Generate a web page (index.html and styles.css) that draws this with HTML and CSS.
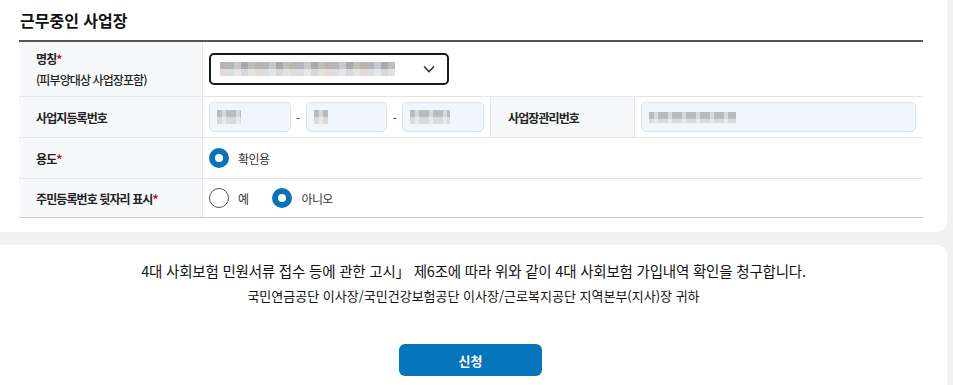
FILE: index.html
```html
<!DOCTYPE html>
<html lang="ko">
<head>
<meta charset="UTF-8" />
<meta name="viewport" content="width=device-width, initial-scale=1" />
<title>근무중인 사업장</title>
<link rel="stylesheet" href="styles.css">
</head>
<body>

<!-- 근무중인 사업장 -->
<section class="card card-top">
  <h2 class="section-title">근무중인 사업장</h2>

  <div class="form-table">
    <div class="row row-name">
      <div class="label">
        <span>명칭<em>*</em></span>
        <span class="sub">(피부양대상 사업장포함)</span>
      </div>
      <div class="cell span-3">
        <div class="select-box">
          <span class="mosaic mosaic-wide"></span>
          <svg class="chevron" width="12" height="8" viewBox="0 0 12 8"><path d="M1 1.5l5 5 5-5" fill="none" stroke="#333" stroke-width="1.6"/></svg>
        </div>
      </div>
    </div>

    <div class="row">
      <div class="label"><span>사업지등록번호</span></div>
      <div class="cell">
        <div class="input small"><span class="mosaic m1"></span></div>
        <span class="dash">-</span>
        <div class="input small"><span class="mosaic m2"></span></div>
        <span class="dash">-</span>
        <div class="input small"><span class="mosaic m3"></span></div>
      </div>
      <div class="label"><span>사업장관리번호</span></div>
      <div class="cell">
        <div class="input wide"><span class="mosaic m4"></span></div>
      </div>
    </div>

    <div class="row">
      <div class="label"><span>용도<em>*</em></span></div>
      <div class="cell span-3">
        <label class="radio"><span class="dot checked"></span>확인용</label>
      </div>
    </div>

    <div class="row">
      <div class="label"><span>주민등록번호 뒷자리 표시<em>*</em></span></div>
      <div class="cell span-3">
        <label class="radio"><span class="dot"></span>예</label>
        <label class="radio"><span class="dot checked"></span>아니오</label>
      </div>
    </div>
  </div>
</section>

<!-- 청구 -->
<section class="card card-bottom">
  <p class="notice">4대 사회보험 민원서류 접수 등에 관한 고시」 제6조에 따라 위와 같이 4대 사회보험 가입내역 확인을 청구합니다.</p>
  <p class="addressee">국민연금공단 이사장/국민건강보험공단 이사장/근로복지공단 지역본부(지사)장 귀하</p>
  <button class="btn-submit" type="button">신청</button>
</section>

</body>
</html>
```

FILE: styles.css
```css
body {
  margin: 0;
  background: #f0f1f0;
  font-family: "Noto Sans CJK KR", "Noto Sans", sans-serif;
  color: #222;
  width: 953px;
  height: 385px;
  overflow: hidden;
}

.card {
  background: #fff;
  width: 947px;
  box-sizing: border-box;
}

.card-top {
  padding: 0 24px 14px 19px;
  border-radius: 0 0 10px 0;
}

.card-bottom {
  margin-top: 13px;
  height: 140px;
  border-radius: 0 10px 0 0;
  text-align: center;
  padding-top: 15px;
}

.section-title {
  margin: 0;
  height: 40px;
  line-height: 40px;
  font-size: 16px;
  font-weight: 700;
  color: #111;
  padding-left: 1px;
}

/* form table */
.form-table {
  border-top: 2px solid #555;
  border-bottom: 1px solid #c9cbce;
}

.row {
  display: grid;
  grid-template-columns: 184px 288px 144px 288px;
  height: 41px;
  border-bottom: 1px solid #e3e5e8;
  box-sizing: border-box;
}

.row:last-child {
  border-bottom: none;
  height: 38px;
}

.row-name {
  height: 55px;
}

.label {
  background: #f7f8f9;
  border-right: 1px solid #e3e5e8;
  display: flex;
  flex-direction: column;
  justify-content: center;
  padding-left: 17px;
  font-size: 12px;
  font-weight: 700;
  letter-spacing: -0.9px;
  color: #222;
  line-height: 21px;
}

.label .sub {
  font-weight: 500;
}

.label em {
  font-style: normal;
  color: #d4001b;
}

.cell {
  display: flex;
  align-items: center;
  padding: 0 6px;
  border-right: 1px solid #e3e5e8;
}

.cell:last-child {
  border-right: none;
}

.span-3 {
  grid-column: span 3;
}

.select-box {
  width: 240px;
  height: 32px;
  box-sizing: border-box;
  border: 2px solid #1a1a1a;
  border-radius: 5px;
  display: flex;
  align-items: center;
  justify-content: space-between;
  padding: 0 12px 0 9px;
}

.input {
  height: 30px;
  box-sizing: border-box;
  background: #f0f6fd;
  border: 1px solid #dbe3ec;
  border-radius: 5px;
  display: flex;
  align-items: center;
  padding-left: 7px;
}

.input.small {
  width: 82px;
}

.input.wide {
  width: 275px;
}

.dash {
  width: 15px;
  text-align: center;
  font-size: 12px;
  color: #444;
}

/* pixelated placeholder for masked values */
.mosaic {
  display: block;
  height: 14px;
  background:
    repeating-linear-gradient(90deg, rgba(255,255,255,0) 0 5px, rgba(255,255,255,0.45) 5px 9px, rgba(255,255,255,0) 9px 14px),
    linear-gradient(180deg, #b3b5ba 0 7px, #d7d8dc 7px 14px);
  opacity: 0.9;
}

.mosaic-wide {
  width: 175px;
  background:
    repeating-linear-gradient(90deg, #b5aaa6 0 7px, #a9b0b5 7px 14px, #c4c4c6 14px 21px, #9da0a6 21px 28px, #b9b8b1 28px 35px),
    #ccc;
  -webkit-mask: linear-gradient(180deg, #000 0 7px, rgba(0,0,0,0.45) 7px 14px);
  mask: linear-gradient(180deg, #000 0 7px, rgba(0,0,0,0.45) 7px 14px);
}

.m1 { width: 24px; }
.m2 { width: 14px; }
.m3 { width: 40px; }
.m4 { width: 87px; height: 11px; }

.chevron {
  display: block;
}

/* radios */
.radio {
  display: inline-flex;
  align-items: center;
  font-size: 12px;
  letter-spacing: -0.6px;
  color: #333;
  margin-right: 24px;
}

.dot {
  width: 20px;
  height: 20px;
  box-sizing: border-box;
  border-radius: 50%;
  border: 1px solid #555;
  background: #fff;
  margin-right: 9px;
}

.dot.checked {
  border: 6px solid #0a72b9;
}

/* request area */
.notice {
  margin: 0;
  font-size: 14.5px;
  letter-spacing: -0.2px;
  color: #111;
  line-height: 22px;
}

.addressee {
  margin: 4px 0 0;
  font-size: 13px;
  letter-spacing: 0;
  color: #111;
  line-height: 20px;
}

.btn-submit {
  margin-top: 38px;
  margin-left: -6px;
  width: 143px;
  height: 32px;
  border: none;
  border-radius: 6px;
  background: #0674ba;
  color: #fff;
  font-family: inherit;
  font-size: 13px;
  font-weight: 700;
  cursor: pointer;
}
```
